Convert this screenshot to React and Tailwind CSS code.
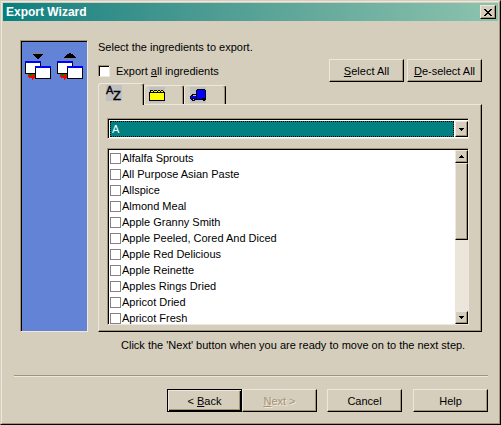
import { useState } from 'react';
import clsx from 'clsx';

const INGREDIENTS = [
  'Alfalfa Sprouts',
  'All Purpose Asian Paste',
  'Allspice',
  'Almond Meal',
  'Apple Granny Smith',
  'Apple Peeled, Cored And Diced',
  'Apple Red Delicious',
  'Apple Reinette',
  'Apples Rings Dried',
  'Apricot Dried',
  'Apricot Fresh',
];

const RAISED =
  'border border-t-[#efe7de] border-l-[#efe7de] border-r-black border-b-black bg-[#d6cebd] shadow-[inset_-1px_-1px_0_#a59473]';
const SUNKEN = 'border border-t-[#a59473] border-l-[#a59473] border-r-[#efe7de] border-b-[#efe7de]';

function WinButton({ children, primary, className, ...props }) {
  return (
    <button
      type="button"
      className={clsx(
        'h-[23px] w-[75px] shrink-0 text-center leading-4 whitespace-nowrap',
        primary
          ? 'border border-black bg-[#d6cebd] shadow-[inset_1px_1px_0_#efe7de,inset_-1px_-1px_0_#000,inset_-2px_-2px_0_#a59473]'
          : RAISED,
        className
      )}
      {...props}
    >
      {children}
    </button>
  );
}

function Triangle({ up }) {
  return (
    <svg width="5" height="3" viewBox="0 0 5 3" shapeRendering="crispEdges" aria-hidden="true">
      <path d={up ? 'M2 0h1v1h1v1h1v1H0V2h1V1h1z' : 'M0 0h5v1H4v1H3v1H2V2H1V1H0z'} />
    </svg>
  );
}

function TransferIcon({ up }) {
  return (
    <svg width="32" height="30" viewBox="0 0 32 30" shapeRendering="crispEdges" aria-hidden="true">
      {up ? (
        <>
          <path d="M15 1h2v1h2v1h1v1h1v1h1v1H10V5h1V4h1V3h1V2h2z" />
          <path fill="#848284" d="M10 6h12v1H10z" />
        </>
      ) : (
        <>
          <path fill="#848284" d="M10 1h12v1H10z" />
          <path d="M11 2h10v1h-1v1h-1v1h-1v1h-1v1h-2V6h-1V5h-1V4h-1V3h-1z" />
        </>
      )}
      {/* back window */}
      <path d="M3 9h16v13H3z" />
      <path fill="#fff" d="M4 11h14v10H4z" />
      <path fill="#00f" d="M3 9h16v2H3z" />
      {/* arrow between windows */}
      <path fill="#008000" d="M6 22h7v2H6z" />
      <path fill="#f00" d="M6 22h1v2h3v-2h1v1h1v1h1v2h-1v1h-1v1h-1v-2H7v-1H6z" />
      {/* front window */}
      <path d="M13 14h16v13H13z" />
      <path fill="#fff" d="M14 16h14v10H14z" />
      <path fill="#00f" d="M13 14h16v2H13z" />
    </svg>
  );
}

function AlphaIcon() {
  return (
    <svg width="16" height="16" viewBox="0 0 16 16" className="overflow-visible" aria-hidden="true">
      <path fill="#c0c0c0" d="M0 0h16v16H0z" />
      <text x="0" y="9" fontSize="11" stroke="#000" strokeWidth="0.4">A</text>
      <text x="7" y="15" fontSize="13" stroke="#000" strokeWidth="0.4">Z</text>
    </svg>
  );
}

function PackageIcon() {
  return (
    <svg width="16" height="16" viewBox="0 0 16 16" shapeRendering="crispEdges" aria-hidden="true">
      <path fill="#c0c0c0" d="M0 0h16v16H0z" />
      <path d="M1 3h1v2H1zM2 3h2v1H2zM5 3h3v1H5zM9 3h2v1H9zM12 3h2v1h-2zM4 4h1v1H4zM8 4h1v1H8zM11 4h1v1h-1zM14 4h1v1h-1zM0 5h16v9H0z" />
      <path fill="#ff0" d="M2 4h2v1H2zM5 4h3v1H5zM9 4h2v1H9zM12 4h2v1h-2zM1 6h14v7H1z" />
    </svg>
  );
}

function TruckIcon() {
  return (
    <svg width="16" height="16" viewBox="0 0 16 16" shapeRendering="crispEdges" aria-hidden="true">
      <path fill="#c0c0c0" d="M0 0h16v16H0z" />
      <path d="M7 2h8v1h1v10h-1v1h-2v-1H5v1H2v-1H1v-1H0V9h1V8h1V7h4V3h1z" />
      <path fill="#00f" d="M7 3h8v9H7zM1 9h5v3H1z" />
      <path fill="#c0c0c0" d="M3 8h3v1H3zM3 12h1v1H3z" />
      <path d="M2 11h3v1H2zM12 11h3v1h-3z" />
    </svg>
  );
}

const TABS = [
  { id: 'name', label: 'By name', Icon: AlphaIcon, size: 'w-[46px] pl-[7px]' },
  { id: 'category', label: 'By category', Icon: PackageIcon, size: 'w-10 pl-1' },
  { id: 'supplier', label: 'By supplier', Icon: TruckIcon, size: 'w-[42px] pl-[5px]' },
];

function App() {
  const [tab, setTab] = useState('name');
  const [letter, setLetter] = useState('A');
  const [exportAll, setExportAll] = useState(false);
  const [checked, setChecked] = useState([]);

  const toggle = (name) => {
    setChecked((prev) => (prev.includes(name) ? prev.filter((n) => n !== name) : [...prev, name]));
  };

  return (
    <div className="min-h-screen border border-t-[#d6cebd] border-l-[#d6cebd] border-r-black border-b-black bg-[#d6cebd] font-['Liberation_Sans',Arial,sans-serif] text-[11px] text-black">
      <div className="min-h-[423px] border border-t-[#efe7de] border-l-[#efe7de] border-r-[#a59473] border-b-[#a59473] p-px">
        <header className="flex h-[18px] items-center justify-between bg-linear-to-r from-[#008080] to-[#8cc3ad] pr-0.5 pl-[3px]">
          <h1 className="text-xs font-bold text-white">Export Wizard</h1>
          <button type="button" aria-label="Close" className={clsx('flex h-3.5 w-4 items-center justify-center', RAISED)}>
            <svg width="8" height="7" viewBox="0 0 8 7" shapeRendering="crispEdges" aria-hidden="true">
              <path d="M0 0h2v1h1v1h2V1h1V0h2v1H7v1H6v1H5v1h1v1h1v1h1v1H6V6H5V5H3v1H2v1H0V6h1V5h1V4h1V3H2V2H1V1H0z" />
            </svg>
          </button>
        </header>

        <main className="flex gap-2.5 pt-[19px] pr-4 pl-[17px]">
          <aside className={clsx('w-[68px] shrink-0 bg-[#6384d6] pt-[11px] pl-px shadow-[inset_1px_1px_0_#000]', SUNKEN)}>
            <div className="flex">
              <TransferIcon />
              <TransferIcon up />
            </div>
          </aside>

          <div className="min-w-0 flex-1">
            <p className="mb-[5px] leading-[14px]">Select the ingredients to export.</p>
            <div className="mb-px flex items-center">
              <label className="flex flex-1 items-center gap-1.5">
                <input
                  type="checkbox"
                  checked={exportAll}
                  onChange={(e) => setExportAll(e.target.checked)}
                  className={clsx('size-3 appearance-none bg-white p-0.5 shadow-[inset_1px_1px_0_#000] checked:bg-black checked:bg-clip-content', SUNKEN)}
                />
                <span className="leading-4">Export <u>a</u>ll ingredients</span>
              </label>
              <div className="flex gap-[3px]">
                <WinButton onClick={() => setChecked(INGREDIENTS)}><u>S</u>elect All</WinButton>
                <WinButton onClick={() => setChecked([])}><u>D</u>e-select All</WinButton>
              </div>
            </div>

            <div role="tablist" className="relative -mb-px flex h-[22px] items-end">
              {TABS.map(({ id, label, Icon, size }) => (
                <button
                  key={id}
                  type="button"
                  role="tab"
                  aria-label={label}
                  aria-selected={tab === id}
                  onClick={() => setTab(id)}
                  className={clsx(
                    'rounded-t-[3px] border-t border-r border-l border-t-[#efe7de] border-r-black border-l-[#efe7de] bg-[#d6cebd] pt-px shadow-[inset_-1px_0_0_#a59473]',
                    size,
                    tab === id ? 'h-[22px]' : 'mb-px h-[19px]'
                  )}
                >
                  <span className="flex h-full items-start"><Icon /></span>
                </button>
              ))}
            </div>

            <div role="tabpanel" className={clsx('px-2 pt-[13px] pr-3 pb-1.5', RAISED)}>
              <div className={clsx('mb-[9px] flex h-[21px] bg-white pt-0.5 pl-0.5 shadow-[inset_1px_1px_0_#000]', SUNKEN)}>
                <select
                  aria-label="Starting letter"
                  value={letter}
                  onChange={(e) => setLetter(e.target.value)}
                  className="mb-px min-w-0 flex-1 appearance-none border border-dotted border-black bg-[#008080] pl-px leading-[14px] text-white outline-none"
                >
                  {'ABCDEFGHIJKLMNOPQRSTUVWXYZ'.split('').map((l) => (
                    <option key={l}>{l}</option>
                  ))}
                </select>
                <span className={clsx('mb-px ml-px flex w-[13px] items-center justify-center', RAISED)}>
                  <Triangle />
                </span>
              </div>

              <div className={clsx('flex h-[177px] bg-white pt-px pl-0.5 shadow-[inset_1px_1px_0_#000]', SUNKEN)}>
                <ul className="flex-1 overflow-y-auto [scrollbar-width:none]">
                  {INGREDIENTS.map((name) => (
                    <li key={name}>
                      <label className="flex h-4 items-center gap-px leading-4">
                        <input
                          type="checkbox"
                          checked={checked.includes(name)}
                          onChange={() => toggle(name)}
                          className="size-[11px] appearance-none border border-[#848284] bg-white p-0.5 checked:bg-black checked:bg-clip-content"
                        />
                        {name}
                      </label>
                    </li>
                  ))}
                </ul>
                <div className="flex w-[13px] flex-col bg-[#ebe5dc]" aria-hidden="true">
                  <span className={clsx('flex h-[13px] items-center justify-center', RAISED)}><Triangle up /></span>
                  <span className={clsx('h-[77px]', RAISED)} />
                  <span className={clsx('mt-auto flex h-[13px] items-center justify-center', RAISED)}><Triangle /></span>
                </div>
              </div>
            </div>
          </div>
        </main>

        <p className="mt-[5px] pl-[118px] leading-4">
          Click the 'Next' button when you are ready to move on to the next step.
        </p>

        <footer className="mr-2.5 ml-[11px] mt-[22px] flex justify-end border-t border-[#a59473] pt-[13px] shadow-[inset_0_1px_0_#efe7de]">
          <WinButton primary>&lt; <u>B</u>ack</WinButton>
          <WinButton disabled className="mr-2.5 text-[#a59473] [text-shadow:1px_1px_0_#efe7de]"><u>N</u>ext &gt;</WinButton>
          <WinButton className="mr-[11px]">Cancel</WinButton>
          <WinButton>Help</WinButton>
        </footer>
      </div>
    </div>
  );
}

export default App;
